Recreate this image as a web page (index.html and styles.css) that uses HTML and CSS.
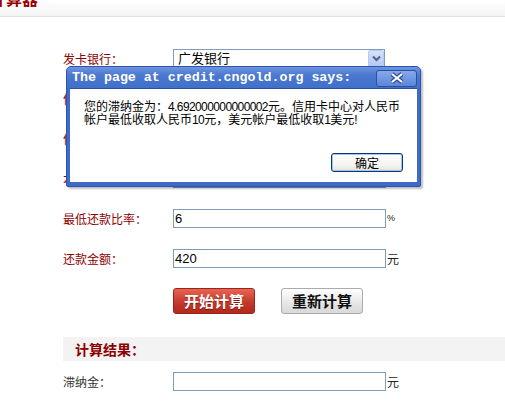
FILE: index.html
```html
<!DOCTYPE html>
<html lang="zh-CN">
<head>
    <meta charset="UTF-8">
    <title>信用卡滞纳金计算器</title>
    <link rel="stylesheet" href="styles.css">
</head>
<body>

<div class="top-bar">
    <h1>计算器</h1>
</div>

<div class="calc">
    <div class="form-row">
        <label class="field-label">发卡银行：</label>
        <div class="select-wrap">
            <select class="bank-select">
                <option>广发银行</option>
            </select>
            <span class="select-arrow">
                <svg width="9" height="7" viewBox="0 0 9 7"><path d="M1 1.5 L4.5 5 L8 1.5" fill="none" stroke="#4d6185" stroke-width="2"/></svg>
            </span>
        </div>
    </div>
    <div class="form-row">
        <label class="field-label">信用卡额度：</label>
        <input class="field-input" type="text" value="">
        <span class="unit">元</span>
    </div>
    <div class="form-row">
        <label class="field-label">信用卡账单：</label>
        <input class="field-input" type="text" value="">
        <span class="unit">元</span>
    </div>
    <div class="form-row">
        <label class="field-label">本期应还款：</label>
        <input class="field-input" type="text" value="">
        <span class="unit">元</span>
    </div>
    <div class="form-row">
        <label class="field-label">最低还款比率：</label>
        <input class="field-input" type="text" value="6">
        <span class="unit unit-small">%</span>
    </div>
    <div class="form-row">
        <label class="field-label">还款金额：</label>
        <input class="field-input" type="text" value="420">
        <span class="unit">元</span>
    </div>

    <div class="btn-row">
        <button type="button" class="btn btn-start">开始计算</button>
        <button type="button" class="btn btn-reset">重新计算</button>
    </div>

    <div class="result-title">计算结果：</div>

    <div class="form-row">
        <label class="field-label plain">滞纳金：</label>
        <input class="field-input" type="text" value="">
        <span class="unit">元</span>
    </div>
</div>

<!-- browser alert box -->
<div class="alert-dialog">
    <div class="alert-title">
        <span>The page at credit.cngold.org says:</span>
        <span class="alert-close">
            <svg width="16" height="12" viewBox="0 0 16 12">
                <path d="M3 2 L13 10 M13 2 L3 10" stroke="#2a4a90" stroke-width="4.5" fill="none"/>
                <path d="M3 2 L13 10 M13 2 L3 10" stroke="#fff" stroke-width="2.2" fill="none"/>
            </svg>
        </span>
    </div>
    <div class="alert-body">
        <p class="alert-msg">您的滞纳金为：<span class="num">4.692000000000002</span>元。信用卡中心对人民币<br>帐户最低收取人民币<span class="num">10</span>元，美元帐户最低收取<span class="num">1</span>美元!</p>
        <button type="button" class="alert-ok">确定</button>
    </div>
</div>

</body>
</html>
```

FILE: styles.css
```css
body {
    margin: 0;
    font-family: "Liberation Sans", "Noto Sans CJK SC", sans-serif;
    font-size: 12px;
    background-color: white;
    color: #333;
    position: relative;
    overflow: hidden;
}

/* page heading, scrolled partly out of view */
.top-bar {
    height: 16px;
    overflow: hidden;
    background: linear-gradient(#ffffff, #f4f4f4);
    border-bottom: 1px solid #e2e2e2;
}

.top-bar h1 {
    margin: -8px 0 0 -10px;
    font-size: 16px;
    line-height: 16px;
    color: #990000;
    font-weight: bold;
}

.calc {
    padding: 21px 0 0 63px;
}

.form-row {
    display: flex;
    align-items: center;
    height: 40px;
}

.field-label {
    width: 110px;
    flex-shrink: 0;
    color: #8b0000;
    font-size: 12px;
}

.field-label.plain {
    color: #333;
}

.field-input {
    width: 213px;
    height: 19px;
    box-sizing: border-box;
    border: 1px solid #7f9db9;
    padding: 0 1px;
    font-family: "Liberation Sans", sans-serif;
    font-size: 13px;
    color: #000;
    margin: 0;
}

.unit {
    margin-left: 1px;
    color: #222;
    font-size: 12px;
}

.unit-small {
    font-size: 9px;
}

.select-wrap {
    position: relative;
    width: 213px;
    height: 19px;
}

.bank-select {
    appearance: none;
    width: 212px;
    height: 19px;
    box-sizing: border-box;
    border: 1px solid #7f9db9;
    background: white;
    padding: 0 4px;
    margin: 0;
    font-family: "Liberation Sans", "Noto Sans CJK SC", sans-serif;
    font-size: 13px;
    color: #000;
}

.select-arrow {
    position: absolute;
    top: 1px;
    right: 2px;
    width: 16px;
    height: 17px;
    box-sizing: border-box;
    border: 1px solid #b9cbf3;
    border-radius: 2px;
    background: linear-gradient(#d6e2fb, #b6c9f3);
    display: flex;
    align-items: center;
    justify-content: center;
}

.btn-row {
    display: flex;
    gap: 26px;
    padding: 10px 0 0 110px;
}

.btn {
    width: 82px;
    height: 26px;
    border-radius: 3px;
    font-family: "Noto Sans CJK SC", sans-serif;
    font-size: 15px;
    font-weight: bold;
    line-height: 22px;
    padding: 0;
    cursor: pointer;
}

.btn-start {
    color: white;
    background: linear-gradient(#ea6452, #c43a2b 55%, #b02a1e);
    border: 1px solid #9b241a;
    text-shadow: 0 1px 1px rgba(80, 0, 0, 0.6);
}

.btn-reset {
    color: #111;
    background: linear-gradient(#ffffff, #e6e6e6 60%, #d8d8d8);
    border: 1px solid #ababab;
}

.result-title {
    margin-top: 23px;
    height: 24px;
    line-height: 24px;
    background-color: #f3f3f3;
    padding-left: 12px;
    font-family: "Noto Sans CJK SC", sans-serif;
    font-size: 14px;
    font-weight: bold;
    color: #8b0000;
}

/* alert dialog sits over the form */
.alert-dialog {
    position: absolute;
    left: 66px;
    top: 66px;
    width: 355px;
    height: 121px;
    box-sizing: border-box;
    background-color: #3f6bc8;
    border: 1px solid #2c54ae;
    border-radius: 5px 5px 2px 2px;
    padding: 0 3px 4px 3px;
    display: flex;
    flex-direction: column;
    box-shadow: 2px 2px 2px rgba(0, 0, 0, 0.25);
}

.alert-title {
    height: 21px;
    flex-shrink: 0;
    display: flex;
    align-items: center;
    justify-content: space-between;
    margin: 0 -3px;
    padding: 0 3px 0 2px;
    background: linear-gradient(#6d95e0, #4a78d0 40%, #4170c8);
    border-radius: 4px 4px 0 0;
    color: white;
    font-family: "Liberation Mono", monospace;
    font-size: 13.3px;
    font-weight: bold;
}

.alert-title span:first-child {
    padding-left: 3px;
}

.alert-close {
    width: 41px;
    height: 17px;
    margin-top: 1px;
    box-sizing: border-box;
    border: 1px solid #2d4f9f;
    border-radius: 3px;
    background: linear-gradient(#86a9ea, #5b86d8);
    display: flex;
    align-items: center;
    justify-content: center;
}

.alert-body {
    flex: 1;
    background-color: white;
    border-top: 1px solid #2b51a6;
    padding: 12px 14px 10px 14px;
    display: flex;
    flex-direction: column;
}

.alert-msg {
    margin: 0;
    white-space: nowrap;
    font-family: "Liberation Sans", "Noto Sans CJK SC", sans-serif;
    font-size: 12px;
    line-height: 13px;
    color: #000;
}

.alert-msg .num {
    letter-spacing: -0.6px;
}

.alert-ok {
    margin-top: auto;
    align-self: flex-end;
    width: 72px;
    height: 19px;
    padding: 0;
    border: 1px solid #003c74;
    border-radius: 3px;
    background: linear-gradient(#ffffff, #f4f3ee 70%, #e3e1d8);
    box-shadow: inset 0 0 0 1px #a8c1ee;
    font-family: "Noto Sans CJK SC", sans-serif;
    font-size: 12px;
    color: #000;
}
```
